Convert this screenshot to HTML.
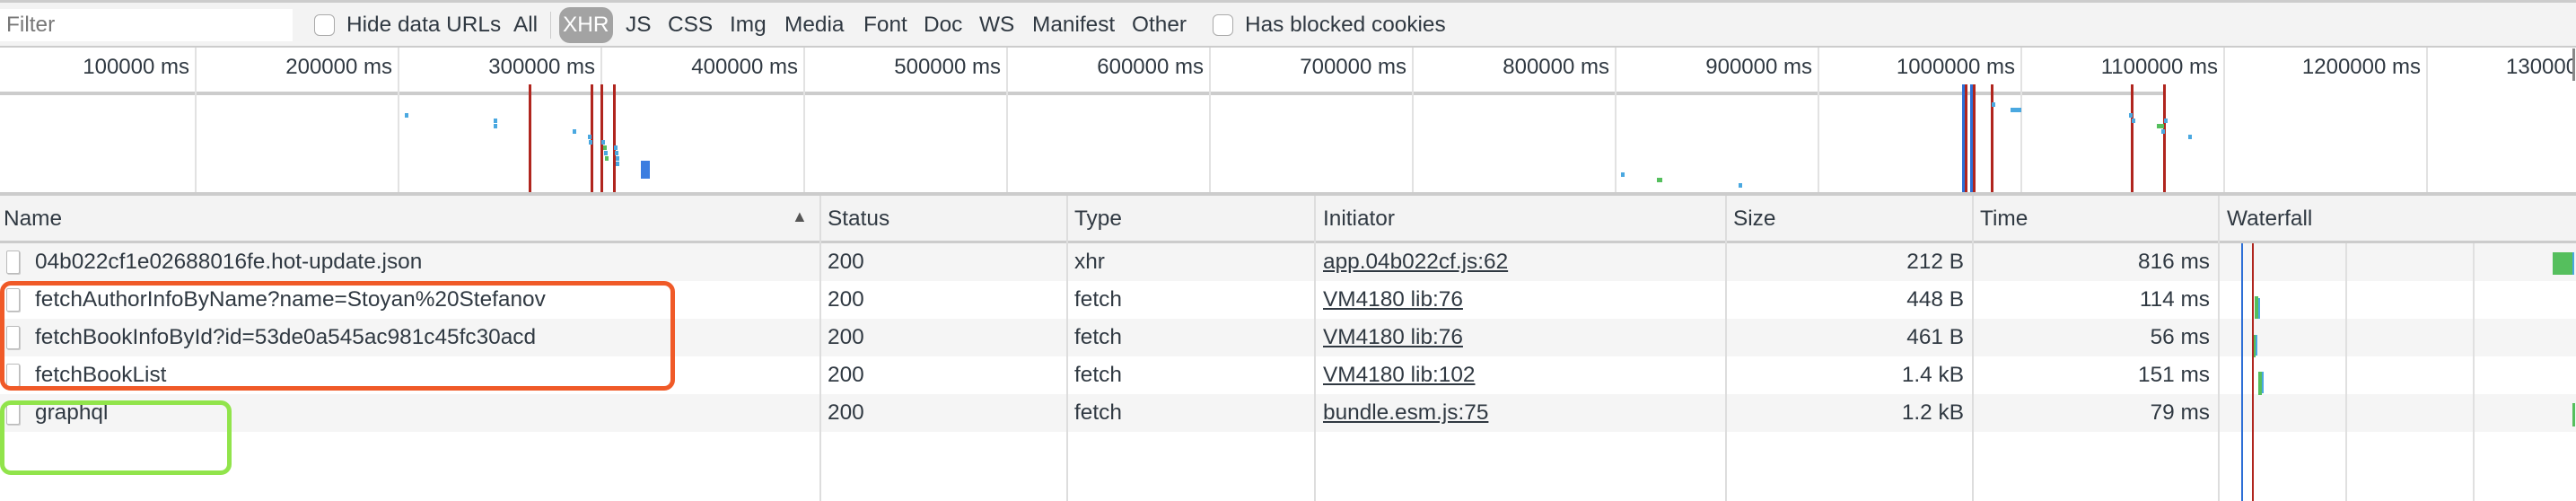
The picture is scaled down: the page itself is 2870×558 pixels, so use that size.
<!DOCTYPE html>
<html><head><meta charset="utf-8"><style>
*{margin:0;padding:0;box-sizing:border-box}
body{width:2870px;height:558px;overflow:hidden;background:#fff;font-family:"Liberation Sans",Arial,sans-serif;font-size:24.4px;color:#303942;position:relative}
.a{position:absolute;white-space:nowrap}
.cb{position:absolute;width:23px;height:24px;border:1.5px solid #aaa;border-radius:6px;background:#fff}
.vl{position:absolute;width:3px}
.dot{position:absolute;width:4px;height:5px;background:#4aa8e0}
.row{position:absolute;left:0;width:2870px;height:42px}
.t{position:absolute;line-height:42px;white-space:nowrap}
.ic{position:absolute;left:7px;top:8px;width:15px;height:26px;border:1.5px solid #bbb;border-radius:2px;background:#fff;box-shadow:1px 1px 0 #ccc}
u{text-decoration:underline}
</style></head><body>
<div class="a" style="left:0;top:0;width:2870px;height:53px;background:#f3f3f3;border-top:3px solid #ccc;border-bottom:2px solid #ccc"></div>
<div class="a" style="left:0;top:10px;width:326px;height:36px;background:#fff"></div>
<div class="a" style="left:7px;top:14px;color:#777">Filter</div>
<div class="cb" style="left:350px;top:16px"></div>
<div class="a" style="left:386px;top:14px">Hide data URLs</div>
<div class="a" style="left:572px;top:14px">All</div>
<div class="a" style="left:613px;top:13px;width:1px;height:30px;background:#ccc"></div>
<div class="a" style="left:623px;top:8px;width:60px;height:40px;background:#a3a3a3;border-radius:12px"></div>
<div class="a" style="left:627px;top:14px;color:#fff">XHR</div>
<div class="a" style="left:697px;top:14px">JS</div>
<div class="a" style="left:744px;top:14px">CSS</div>
<div class="a" style="left:813px;top:14px">Img</div>
<div class="a" style="left:874px;top:14px">Media</div>
<div class="a" style="left:962px;top:14px">Font</div>
<div class="a" style="left:1029px;top:14px">Doc</div>
<div class="a" style="left:1091px;top:14px">WS</div>
<div class="a" style="left:1150px;top:14px">Manifest</div>
<div class="a" style="left:1261px;top:14px">Other</div>
<div class="cb" style="left:1351px;top:16px"></div>
<div class="a" style="left:1387px;top:14px">Has blocked cookies</div>

<div class="a" style="left:0;top:214px;width:2870px;height:4px;background:#ccc"></div>
<div class="a" style="left:0;top:102px;width:2413px;height:4px;background:#ccc"></div>
<div id="grid"></div>
<div class="a" style="left:2866px;top:54px;width:3px;height:36px;background:#888"></div>

<div class="vl a" style="left:589px;top:94px;height:120px;background:#b0251e"></div>
<div class="vl a" style="left:658px;top:94px;height:120px;background:#b0251e"></div>
<div class="vl a" style="left:669px;top:94px;height:120px;background:#b0251e"></div>
<div class="vl a" style="left:683px;top:94px;height:120px;background:#b0251e"></div>
<div class="vl a" style="left:2186px;top:94px;height:120px;background:#2d6fd6"></div>
<div class="vl a" style="left:2189px;top:94px;height:120px;background:#b0251e"></div>
<div class="vl a" style="left:2195px;top:94px;height:120px;background:#2d6fd6"></div>
<div class="vl a" style="left:2198px;top:94px;height:120px;background:#b0251e"></div>
<div class="vl a" style="left:2218px;top:94px;height:120px;background:#b0251e"></div>
<div class="vl a" style="left:2374px;top:94px;height:120px;background:#b0251e"></div>
<div class="vl a" style="left:2410px;top:94px;height:120px;background:#b0251e"></div>
<div class="a" style="left:714px;top:179px;width:10px;height:20px;background:#3b7de0"></div>
<div class="dot" style="left:451px;top:126px"></div>
<div class="dot" style="left:550px;top:132px"></div>
<div class="dot" style="left:550px;top:138px"></div>
<div class="dot" style="left:638px;top:144px"></div>
<div class="dot" style="left:655px;top:150px"></div>
<div class="dot" style="left:656px;top:156px"></div>
<div class="dot" style="left:670px;top:156px"></div>
<div class="dot" style="left:672px;top:162px;background:#55bf5d"></div>
<div class="dot" style="left:684px;top:162px"></div>
<div class="dot" style="left:673px;top:168px"></div>
<div class="dot" style="left:674px;top:174px;background:#55bf5d"></div>
<div class="dot" style="left:685px;top:168px"></div>
<div class="dot" style="left:686px;top:174px"></div>
<div class="dot" style="left:686px;top:180px"></div>
<div class="dot" style="left:1806px;top:192px"></div>
<div class="dot" style="left:1846px;top:198px;width:6px;background:#55bf5d"></div>
<div class="dot" style="left:1937px;top:204px"></div>
<div class="dot" style="left:2219px;top:114px"></div>
<div class="dot" style="left:2240px;top:120px;width:12px"></div>
<div class="dot" style="left:2372px;top:126px"></div>
<div class="dot" style="left:2375px;top:132px"></div>
<div class="dot" style="left:2403px;top:138px;width:8px;background:#55bf5d"></div>
<div class="dot" style="left:2411px;top:132px"></div>
<div class="dot" style="left:2408px;top:144px"></div>
<div class="dot" style="left:2438px;top:150px"></div>

<div class="a" style="left:0;top:218px;width:2870px;height:53px;background:#f3f3f3;border-bottom:3px solid #ccc"></div>
<div class="row" style="top:271px;background:#f5f5f5"></div>
<div class="row" style="top:313px;background:#fff"></div>
<div class="row" style="top:355px;background:#f5f5f5"></div>
<div class="row" style="top:397px;background:#fff"></div>
<div class="row" style="top:439px;background:#f5f5f5"></div>
<div id="cols"></div>
<div class="vl a" style="left:2497px;top:271px;height:287px;background:#2d6fd6;width:2px"></div>
<div class="vl a" style="left:2509px;top:271px;height:287px;background:#b0251e;width:2px"></div>

<div class="a" style="left:4px;top:230px">Name</div>
<div class="a" style="left:882px;top:231px;font-size:18px;color:#555">▲</div>
<div class="a" style="left:922px;top:230px">Status</div>
<div class="a" style="left:1197px;top:230px">Type</div>
<div class="a" style="left:1474px;top:230px">Initiator</div>
<div class="a" style="left:1931px;top:230px">Size</div>
<div class="a" style="left:2206px;top:230px">Time</div>
<div class="a" style="left:2481px;top:230px">Waterfall</div>

<div id="rows"></div>

<div class="a" style="left:2844px;top:281px;width:22px;height:25px;background:#55bf5d"></div>
<div class="a" style="left:2866px;top:281px;width:2px;height:25px;background:#4aa8e0"></div>
<div class="a" style="left:2512px;top:330px;width:4px;height:25px;background:#55bf5d"></div>
<div class="a" style="left:2516px;top:332px;width:2px;height:23px;background:#4aa8e0"></div>
<div class="a" style="left:2511px;top:373px;width:2px;height:25px;background:#55bf5d"></div>
<div class="a" style="left:2513px;top:373px;width:2px;height:23px;background:#4aa8e0"></div>
<div class="a" style="left:2516px;top:414px;width:4px;height:26px;background:#55bf5d"></div>
<div class="a" style="left:2520px;top:414px;width:2px;height:24px;background:#4aa8e0"></div>
<div class="a" style="left:2866px;top:449px;width:3px;height:26px;background:#55bf5d"></div>

<div class="a" style="left:0;top:313px;width:752px;height:122px;border:5px solid #f05a28;border-radius:12px"></div>
<div class="a" style="left:0;top:446px;width:258px;height:83px;border:5px solid #91e44b;border-radius:12px"></div>

<script>
var g='';
var labels=['100000','200000','300000','400000','500000','600000','700000','800000','900000','1000000','1100000','1200000','130000'];
for(var k=0;k<13;k++){var x=217+226*k;
 if(x<2870) g+='<div class="a" style="left:'+x+'px;top:53px;width:2px;height:161px;background:#e2e2e2"></div>';
 if(k<12) g+='<div class="a" style="right:'+(2870-x+6)+'px;top:61px;font-size:24px">'+labels[k]+' ms</div>';
 else g+='<div class="a" style="left:2792px;top:61px;font-size:24px;width:76px;overflow:hidden">1300000</div>';
}
document.getElementById('grid').innerHTML=g;
var c='';[913,1188,1464,1922,2197,2471].forEach(function(x){c+='<div class="a" style="left:'+x+'px;top:218px;width:2px;height:340px;background:#ddd"></div>'});
[2613,2755].forEach(function(x){c+='<div class="a" style="left:'+x+'px;top:271px;width:2px;height:287px;background:#e0e0e0"></div>'});
document.getElementById('cols').innerHTML=c;
var R=[['04b022cf1e02688016fe.hot-update.json','xhr','app.04b022cf.js:62','212 B','816 ms'],
['fetchAuthorInfoByName?name=Stoyan%20Stefanov','fetch','VM4180 lib:76','448 B','114 ms'],
['fetchBookInfoById?id=53de0a545ac981c45fc30acd','fetch','VM4180 lib:76','461 B','56 ms'],
['fetchBookList','fetch','VM4180 lib:102','1.4 kB','151 ms'],
['graphql','fetch','bundle.esm.js:75','1.2 kB','79 ms']];
var h='';R.forEach(function(r,i){var y=271+42*i;
h+='<div class="row" style="top:'+y+'px;background:transparent"><div class="ic"></div>'+
'<div class="t" style="left:39px">'+r[0]+'</div><div class="t" style="left:922px">200</div>'+
'<div class="t" style="left:1197px">'+r[1]+'</div><div class="t" style="left:1474px"><u>'+r[2]+'</u></div>'+
'<div class="t" style="right:'+(2870-2188)+'px">'+r[3]+'</div><div class="t" style="right:'+(2870-2462)+'px">'+r[4]+'</div></div>';});
document.getElementById('rows').innerHTML=h;
</script>
</body></html>
